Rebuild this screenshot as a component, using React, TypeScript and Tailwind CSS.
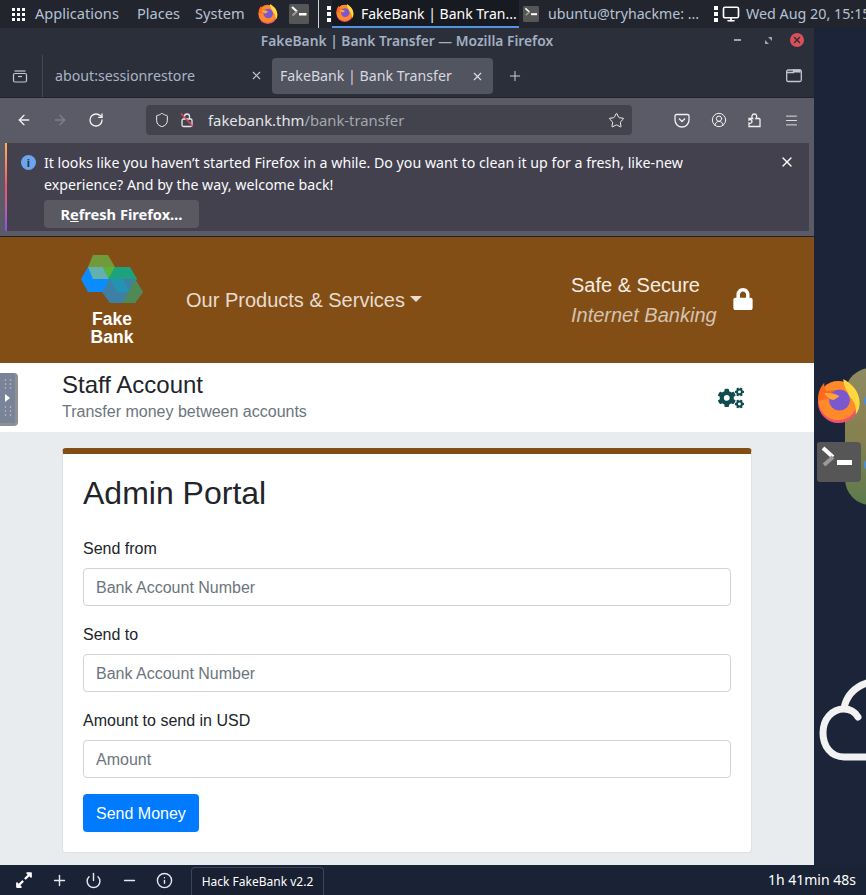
import React from 'react';
import { ArrowLeft, ArrowRight, RotateCw, Shield, Star, Plus, Minus, Power, Info, X, Menu, Monitor, CircleUserRound } from 'lucide-react';
import { FaCogs, FaLock, FaExpandAlt } from 'react-icons/fa';

function FirefoxIcon({ size = 20 }: { size?: number }) {
  return (
    <svg width={size} height={size} viewBox="2 1 45 46" className="shrink-0">
      <circle cx="24" cy="25.5" r="21.5" fill="#f2506e" />
      <circle cx="23.5" cy="23.5" r="20.5" fill="#ff8a2a" />
      <path d="M29 1c8 5 16 11 17 23 .5 6-1 10-4 14 1-9-2-15-7-19-2-6-6-11-6-18z" fill="#ffd83f" />
      <path d="M3 24c-1-7 1-13 6-19 0 4 1 7 3 9 4-2 8-2 11 0l-5 6-15 4z" fill="#ff6a1f" />
      <circle cx="25" cy="23" r="11" fill="#7c58cf" />
      <path d="M9 16c6-1 11 0 16 3l-6 4c-4 0-7-3-10-7z" fill="#ffa436" />
    </svg>
  );
}

function TerminalIcon({ className }: { className: string }) {
  return (
    <svg viewBox="0 0 40 40" className={className}>
      <rect width="40" height="40" rx="3" fill="#565656" />
      <path d="M6 6l10 9" stroke="#fff" strokeWidth="4" />
      <path d="M16 15l-9 8" stroke="#9a9a9a" strokeWidth="4" />
      <rect x="20" y="18" width="15" height="5" fill="#fff" />
    </svg>
  );
}

function Logo() {
  return (
    <svg width="64" height="50" viewBox="0 0 64 50">
      <polygon points="13,0 28,0 35,12 29,24 13,24 8,12" fill="#72993a" />
      <polygon points="1,24 8,12 35,12 43,24 37,37 8,37" fill="#0a8cff" />
      <polygon points="8,12 23,12 29,24 13,24" fill="#63b0ad" />
      <polygon points="23,12 35,12 29,24" fill="#5bb535" />
      <polygon points="35,12 50,12 57,24 50,37 35,37 28,24" fill="#1da27f" />
      <polygon points="30,24 55,24 63,37 55,48 30,48 22,37" fill="#3d7fa5" />
      <polygon points="30,24 43,24 50,37 37,37" fill="#1a9ab8" fillOpacity="0.7" />
      <polygon points="55,24 63,37 55,48 43,48" fill="#4f8a55" />
    </svg>
  );
}

function Field({ label, placeholder }: { label: string; placeholder: string }) {
  return (
    <div className="mb-4">
      <label className="block pt-px mb-[7px] text-base leading-6 text-[#212529]">{label}</label>
      <input
        placeholder={placeholder}
        className="block w-full h-[38px] px-3 pt-[2px] text-base bg-white border border-[#ced4da] rounded placeholder:text-[#6c757d]"
      />
    </div>
  );
}

function Dots() {
  return (
    <div className="flex flex-col gap-[2px] shrink-0">
      <span className="w-1 h-1 bg-white" />
      <span className="w-1 h-1 bg-white" />
      <span className="w-1 h-1 bg-white" />
    </div>
  );
}

export default function App() {
  const ui = { fontFamily: '"Noto Sans", sans-serif' };
  return (
    <div className="w-[866px] h-[895px] overflow-hidden flex flex-col bg-[#1a2336] font-['Liberation_Sans',Arial,sans-serif]">
      {/* top panel */}
      <div style={ui} className="h-7 shrink-0 flex items-center overflow-hidden bg-[#22252d] text-[14.6px] text-[#b6c2d4] whitespace-nowrap">
        <div className="grid grid-cols-3 gap-[2px] ml-3 mr-[10px] w-[13px] shrink-0">
          {Array.from({ length: 9 }).map((_, i) => (
            <span key={i} className="w-[3px] h-[3px] bg-white" />
          ))}
        </div>
        <span className="w-[102px] shrink-0">Applications</span>
        <span className="w-[58px] shrink-0">Places</span>
        <span className="w-[63px] shrink-0">System</span>
        <FirefoxIcon size={20} />
        <TerminalIcon className="ml-[11px] w-5 h-5 shrink-0" />
        <span className="w-px h-7 bg-[#cfd4dc] ml-[9px] mr-[8px] shrink-0" />
        <Dots />
        <div className="w-[187px] ml-[1px] h-7 flex items-center pl-1 bg-[#171a21] border-b-2 border-[#5294e2] text-white shrink-0">
          <FirefoxIcon size={18} />
          <span className="ml-[7px] text-[14px]">FakeBank | Bank Tran...</span>
        </div>
        <TerminalIcon className="ml-1 w-4 h-4 shrink-0" />
        <span className="ml-[9px] w-[166px] shrink-0 text-[14.2px]">ubuntu@tryhackme: ...</span>
        <Dots />
        <Monitor size={18} className="ml-[4px] text-white shrink-0" strokeWidth={2.2} />
        <span className="ml-[6px] shrink-0 text-[14.3px]">Wed Aug 20, 15:15</span>
      </div>

      <div className="flex flex-1 min-h-0">
        {/* firefox window */}
        <div className="w-[814px] shrink-0 flex flex-col">
          <div style={ui} className="h-[27px] shrink-0 relative flex items-center justify-center bg-[#2b2f3a] text-[13.8px] font-semibold text-[#a3b0c2]">
            FakeBank | Bank Transfer — Mozilla Firefox
            <span className="absolute left-[734px] top-[11px] w-[7px] h-[2px] bg-[#a0a6b0]" />
            <svg width="7" height="7" viewBox="0 0 7 7" className="absolute left-[765px] top-[9px]">
              <path d="M3 0h4v4zM0 3l4 4H0z" fill="#a0a6b0" />
            </svg>
            <span className="absolute left-[790px] top-[5px] w-[14px] h-[14px] rounded-full bg-[#d9505a] flex items-center justify-center">
              <X size={10} strokeWidth={3.5} className="text-[#2b2f3a]" />
            </span>
          </div>

          <div style={ui} className="h-[43px] shrink-0 flex items-center bg-[#2b2f3a] border-b border-[#1f2229] text-[14.2px]">
            <div className="w-[43px] h-full shrink-0 flex items-center pl-3 border-r border-[#444854]">
              <svg width="16" height="16" viewBox="0 0 16 16" fill="none" stroke="#c3c7cf" strokeWidth="1.2">
                <path d="M2.5 3h11" />
                <rect x="1.5" y="5.5" width="13" height="8.5" rx="1.5" />
                <path d="M6 8.5h4" />
              </svg>
            </div>
            <div className="w-[229px] shrink-0 flex items-center pl-3 pr-[9px] text-[#a9b4c4]">
              <span className="flex-1">about:sessionrestore</span>
              <X size={13} className="text-[#c3c7cf]" />
            </div>
            <div className="w-[221px] h-9 shrink-0 flex items-center pl-2 pr-[9px] rounded bg-[#52545f] text-[#d5d9e0]">
              <span className="flex-1">FakeBank | Bank Transfer</span>
              <X size={13} className="text-[#dfe2e6]" />
            </div>
            <Plus size={16} strokeWidth={1.4} className="ml-[14px] text-[#d5d9e0]" />
            <svg width="16" height="14" viewBox="0 0 16 14" fill="none" stroke="#c3c7cf" strokeWidth="1.3" className="ml-[263px]">
              <rect x="0.7" y="1" width="14.6" height="11.5" rx="1.5" />
              <path d="M1 3.5h6.5V1.2h6.5v2.3" fill="#c3c7cf" />
            </svg>
          </div>

          <div className="h-[44px] shrink-0 flex items-center bg-[#5a5b67] text-[#f0f1f3]">
            <ArrowLeft size={16} className="ml-4" />
            <ArrowRight size={16} className="ml-[20px] text-[#80818b]" />
            <RotateCw size={16} className="ml-[20px]" />
            <div style={ui} className="ml-[42px] w-[486px] h-[30px] flex items-center rounded bg-[#42434d] text-[14.8px]">
              <Shield size={16} strokeWidth={1.5} className="ml-2" />
              <svg width="14" height="16" viewBox="0 0 14 16" fill="none" className="ml-[10px]">
                <rect x="2" y="7" width="10" height="7.5" rx="1.5" stroke="#e6e7ea" strokeWidth="1.3" />
                <path d="M4.5 7V4.5a2.5 2.5 0 0 1 5 0V7" stroke="#e6e7ea" strokeWidth="1.3" />
                <path d="M1 1.5l12 13" stroke="#e0455a" strokeWidth="1.4" />
              </svg>
              <span className="ml-[14px] text-[#e2e4e8]">fakebank.thm<span className="text-[#a5a7ae]">/bank-transfer</span></span>
              <Star size={17} strokeWidth={1.4} className="ml-auto mr-[7px]" />
            </div>
            <svg width="16" height="16" viewBox="0 0 16 16" fill="none" stroke="#f0f1f3" strokeWidth="1.3" className="ml-[42px]">
              <path d="M2.5 2.5h11A1.5 1.5 0 0 1 15 4v4a7 7 0 0 1-14 0V4a1.5 1.5 0 0 1 1.5-1.5z" />
              <path d="M5 6.5L8 9.5l3-3" />
            </svg>
            <CircleUserRound size={16} strokeWidth={1.5} className="ml-[21px]" />
            <svg width="16" height="16" viewBox="0 0 16 16" fill="none" stroke="#f0f1f3" strokeWidth="1.3" className="ml-[20px]">
              <path d="M2 6.500h3.500c-1.200-1.500-.7-4.500 1.800-4.500s3 3 1.700 4.500H12a1 1 0 0 1 1 1V14.500H2V11c1.500.8 3-.2 3-1.600S3.500 7.200 2 8z" />
            </svg>
            <Menu size={15} strokeWidth={1.4} className="ml-[21px]" />
          </div>

          {/* notification */}
          <div style={ui} className="h-[95px] shrink-0 bg-[#5a5b67] px-[5px] pt-px border-b border-[#1f2229]">
            <div className="h-[88px] bg-[#42414d] flex text-[14.2px] leading-[22px] text-[#fbfbfe]">
              <span className="w-[2px] shrink-0 bg-gradient-to-b from-[#ffb44a] via-[#f2506e] to-[#8a4fe8]" />
              <span className="ml-[14px] mt-3 w-[15px] h-[15px] shrink-0 rounded-full bg-[#6ca4f0] flex items-center justify-center text-[11px] font-bold text-[#2b2f3a]">i</span>
              <div className="ml-[8px] mt-[9px] flex-1">
                <p className="w-[680px]">It looks like you haven’t started Firefox in a while. Do you want to clean it up for a fresh, like-new experience? And by the way, welcome back!</p>
                <button className="mt-[4px] w-[155px] h-7 rounded bg-[#5a5962] text-[14.6px] font-bold text-[#fbfbfe]">
                  R<span className="underline">e</span>fresh Firefox…
                </button>
              </div>
              <X size={16} className="mt-[11px] mr-[14px] text-[#fbfbfe]" />
            </div>
          </div>

          {/* page */}
          <div className="flex-1 min-h-0 flex flex-col bg-[#e9ecef] relative">
            <div className="h-[126px] shrink-0 flex items-center bg-[#834e16]">
              <div className="ml-[80px] w-[64px] flex flex-col items-center">
                <Logo />
                <span className="mt-[5px] text-center text-[17.5px] leading-[18px] font-bold text-white">Fake<br />Bank</span>
              </div>
              <span className="ml-[42px] mb-px text-xl text-[#e7dccf]">Our Products &amp; Services</span>
              <span className="ml-[5px] mb-[2px] w-0 h-0 border-x-[6px] border-x-transparent border-t-[6px] border-t-[#e7dccf]" />
              <div className="ml-[149px] mb-px text-xl leading-[30px] text-[#f3ece4]">
                <div>Safe &amp; Secure</div>
                <div className="italic text-[#d4c3b0]">Internet Banking</div>
              </div>
              <FaLock size={22} className="ml-[15px] mb-[3px] text-white" />
            </div>

            <div className="h-[69px] shrink-0 flex items-center bg-white pl-[62px]">
              <div className="flex-1">
                <div className="-mt-px mb-px text-2xl leading-[28px] text-[#212529]">Staff Account</div>
                <div className="text-base leading-[24px] text-[#6c757d]">Transfer money between accounts</div>
              </div>
              <FaCogs size={26} className="mr-[70px] text-[#0f4c4f]" />
            </div>

            <div className="mx-[62px] mt-4 h-[405px] bg-white border border-[#dee2e6] border-t-[6px] border-t-[#834e16] rounded px-5 pt-5">
              <h1 className="mb-6 text-[32px] leading-[38px] text-[#212529]">Admin Portal</h1>
              <Field label="Send from" placeholder="Bank Account Number" />
              <Field label="Send to" placeholder="Bank Account Number" />
              <Field label="Amount to send in USD" placeholder="Amount" />
              <button className="h-[38px] px-[13px] pt-[2px] rounded bg-[#007bff] text-base text-white">Send Money</button>
            </div>

            {/* collapsed side panel handle */}
            <div className="absolute left-0 top-[136px] w-[18px] h-[53px] flex flex-col items-center justify-center gap-[3px] rounded-r bg-[#7a8499] border-r-[3px] border-b-[3px] border-[#8e9094]">
              <span className="w-[9px] h-[13px] bg-[radial-gradient(#a9afbc_1px,transparent_1.2px)] bg-[length:5px_4px]" />
              <span className="w-0 h-0 border-y-[4px] border-y-transparent border-l-[5px] border-l-white" />
              <span className="w-[9px] h-[13px] bg-[radial-gradient(#a9afbc_1px,transparent_1.2px)] bg-[length:5px_4px]" />
            </div>
          </div>
        </div>

        {/* desktop */}
        <div className="relative flex-1 bg-[#1b2438]">
          <div className="absolute left-[31px] top-[340px] w-[40px] h-[137px] rounded-l-[26px] bg-gradient-to-b from-[#8f8a62] via-[#86804f] to-[#5b7a4d]" />
          <span className="absolute left-[50px] top-[368px] w-[4px] h-[10px] rounded-l-full bg-[#4a90d9]" />
          <span className="absolute left-[50px] top-[432px] w-[4px] h-[10px] rounded-l-full bg-[#4a90d9]" />
          <div className="absolute left-[3px] top-[351px]"><FirefoxIcon size={44} /></div>
          <div className="absolute left-[3px] top-[414px] w-[44px] h-[40px] rounded bg-[#565656]">
            <TerminalIcon className="w-[40px] h-[40px]" />
          </div>
          <svg width="52" height="90" viewBox="0 0 52 90" fill="none" stroke="#f2f2f2" strokeWidth="7" strokeLinecap="round" className="absolute left-0 top-[648px]">
            <path d="M56 81H30C17 81 9 70 9 57C9 43 18 33 30 33C36 33 41 36 44 41" />
            <path d="M30 32C33 18 42 10 56 6" />
          </svg>
        </div>
      </div>

      {/* bottom bar */}
      <div style={ui} className="h-[30px] shrink-0 flex items-center bg-[#1a2336] text-xs text-white">
        <FaExpandAlt size={18} className="ml-[15px]" />
        <Plus size={17} className="ml-[18px] text-[#e5e7eb]" />
        <Power size={17} className="ml-[17px] text-[#e5e7eb]" />
        <Minus size={17} className="ml-[19px] text-[#e5e7eb]" />
        <Info size={17} className="ml-[18px] text-[#e5e7eb]" />
        <div className="ml-[18px] w-[133px] h-7 mt-[2px] flex items-center justify-center rounded-t border border-b-0 border-[#3a445a] bg-[#182032]">Hack FakeBank v2.2</div>
        <span className="ml-auto mr-[10px] text-[14px]">1h 41min 48s</span>
      </div>
    </div>
  );
}
